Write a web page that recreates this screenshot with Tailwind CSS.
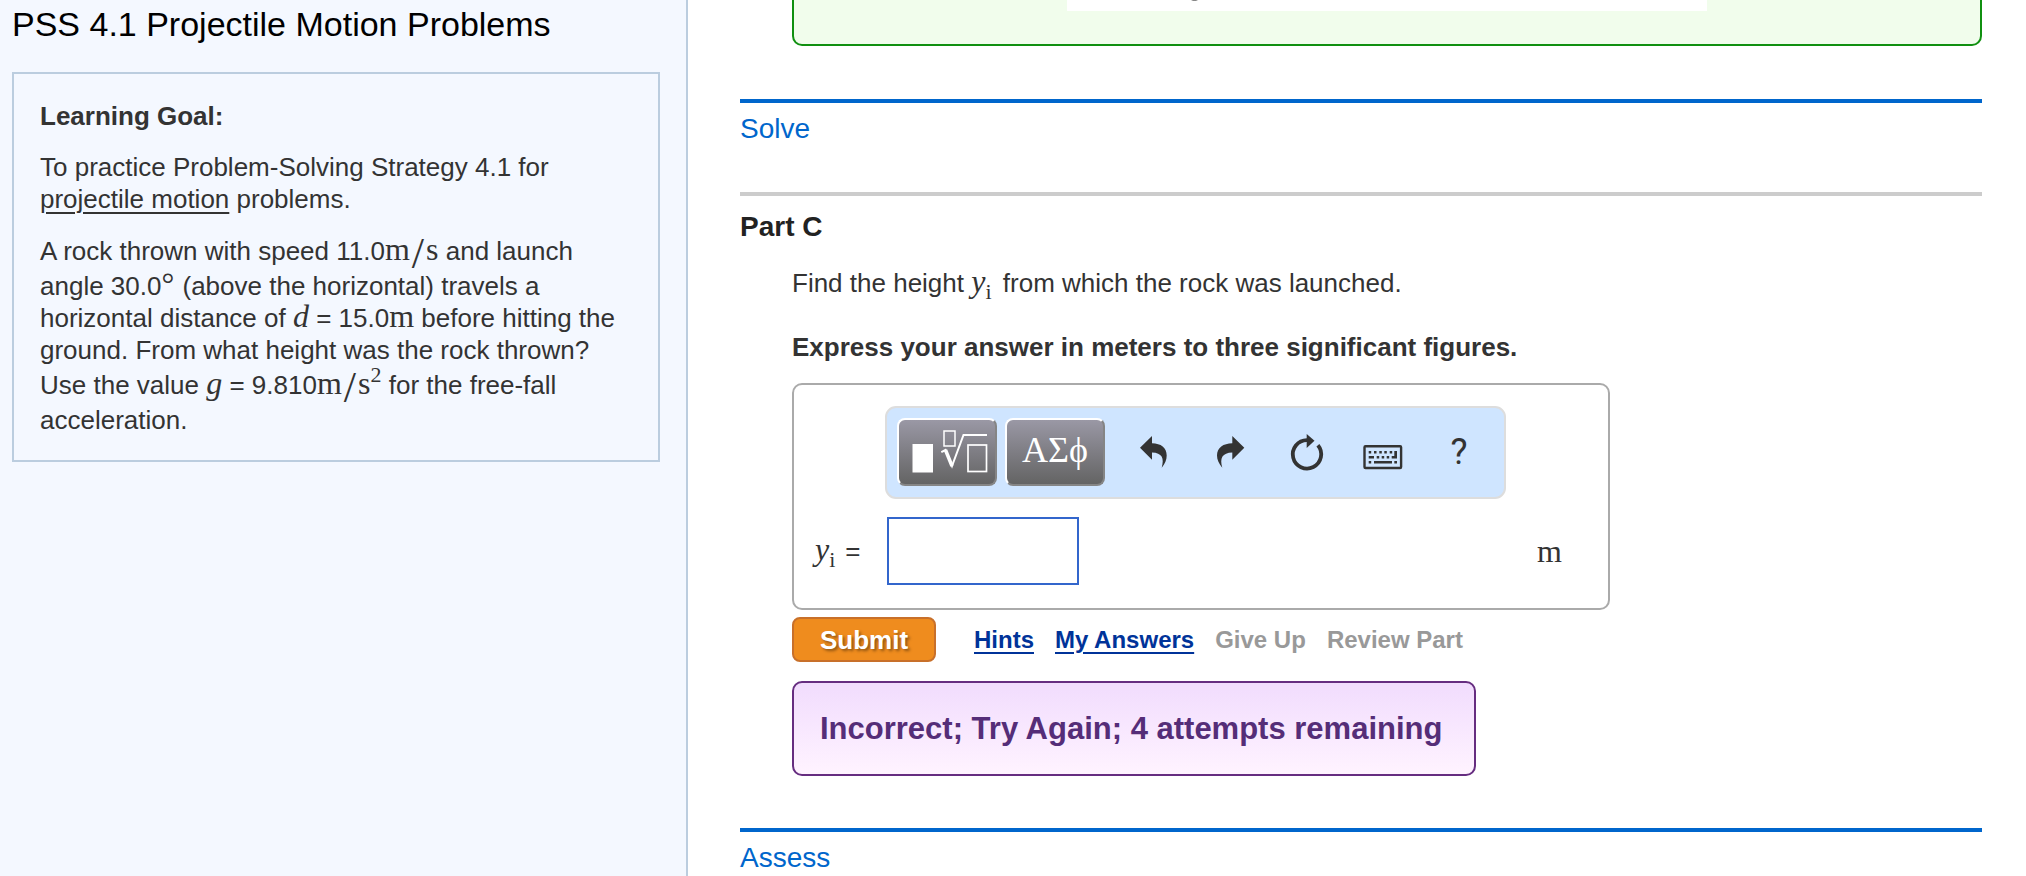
<!DOCTYPE html>
<html lang="en">
  <head>
    <meta charset="UTF-8" />
    <meta name="viewport" content="width=device-width, initial-scale=1.0" />
    <title>PSS 4.1 Projectile Motion Problems</title>
    <script src="https://cdn.jsdelivr.net/npm/@tailwindcss/browser@4"></script>
  </head>
  <body class="flex min-h-screen bg-white font-['Liberation_Sans',Arial,sans-serif] text-[26px] leading-8 text-[#333]">
    <!-- Problem statement -->
    <aside class="w-[688px] shrink-0 border-r-2 border-[#bbcddf] bg-[#f4f8ff] pt-2 pr-[26px] pl-3">
      <h1 class="text-[34px] leading-8 text-black">PSS 4.1 Projectile Motion Problems</h1>

      <section class="mt-8 border-2 border-[#bbcddf] px-[26px] pt-[26px] pb-6">
        <h2 class="font-bold">Learning Goal:</h2>
        <p class="mt-[19px]">
          To practice Problem-Solving Strategy 4.1 for
          <a href="#" class="underline decoration-2 underline-offset-4">projectile motion</a> problems.
        </p>
        <p class="mt-5">
          A rock thrown with speed 11.0<span class="font-['Liberation_Serif',serif] text-[32px] leading-6">m</span><span class="mx-[2px] align-[-8px] font-['Liberation_Serif',serif] text-[44px] leading-8">/</span><span class="font-['Liberation_Serif',serif] text-[32px] leading-6">s</span>
          and launch angle 30.0<span class="mr-px font-['Liberation_Serif',serif] text-[32px] leading-6">°</span>
          (above the horizontal) travels a horizontal distance of
          <i class="font-['Liberation_Serif',serif] text-[32px] leading-6">d</i> = 15.0<span class="font-['Liberation_Serif',serif] text-[32px] leading-6">m</span>
          before hitting the ground. From what height was the rock thrown? Use the value
          <i class="font-['Liberation_Serif',serif] text-[32px] leading-6">g</i> = 9.810<span class="font-['Liberation_Serif',serif] text-[32px] leading-6">m</span><span class="mx-[2px] align-[-8px] font-['Liberation_Serif',serif] text-[44px] leading-8">/</span><span class="font-['Liberation_Serif',serif] text-[32px] leading-6">s</span><span class="align-[12px] font-['Liberation_Serif',serif] text-[22px] leading-[18px]">2</span>
          for the free-fall acceleration.
        </p>
      </section>
    </aside>

    <main class="min-w-0 flex-1 pr-11 pl-[52px]">
      <!-- End of the previous part -->
      <div class="ml-[52px] h-[46px] rounded-b-[10px] border-2 border-t-0 border-[#109010] bg-[#f1fdec]">
        <div class="mx-auto h-[11px] w-[640px] bg-white">
          <svg class="ml-[123px] h-[2px] w-2" viewBox="0 0 8 2" aria-hidden="true">
            <path d="M1 0H8L6 1H3Z" fill="#888" />
          </svg>
        </div>
      </div>

      <section class="mt-[53px] border-t-4 border-[#0066cc] pt-[10px]">
        <h2 class="text-[28px] leading-8 text-[#0066cc]">Solve</h2>
      </section>

      <section class="mt-[47px] border-t-4 border-[#ccc] pt-[15px]">
        <h3 class="text-[28px] leading-8 font-bold text-[#222]">Part C</h3>

        <div class="pl-[52px]">
          <p class="mt-6">
            Find the height
            <i class="font-['Liberation_Serif',serif] text-[32px] leading-6">y</i><span class="mr-1 align-[-7px] font-['Liberation_Serif',serif] text-[22px] leading-[14px]">i</span>
            from which the rock was launched.
          </p>
          <p class="mt-8 font-bold">Express your answer in meters to three significant figures.</p>

          <form>
            <div class="mt-5 w-[818px] rounded-[10px] border-2 border-[#aaa] px-[21px] pt-[21px] pb-[23px]">
              <!-- Equation toolbar -->
              <div class="ml-[70px] flex w-[621px] rounded-[11px] border-2 border-[#ddd] bg-[#cfe5ff] pt-[10px] pb-[11px] pl-[10px]">
                <div class="flex gap-2">
                  <button type="button" aria-label="Templates" class="h-[68px] w-[100px] rounded-[8px] border-2 border-t-white border-r-[#858585] border-b-[#858585] border-l-white bg-linear-to-b from-[#9a98a5] to-[#646464]">
                    <svg class="h-16 w-24" viewBox="2 2 96 64" fill="none" stroke="white">
                      <rect x="15.5" y="26" width="20.5" height="28.5" fill="white" stroke="none" />
                      <rect x="47" y="13" width="11" height="15" stroke-width="1.5" />
                      <path d="M44.3 34.2L48.5 32L55 48L66.5 17H90" stroke-width="2" />
                      <path d="M48.5 32L55 48" stroke-width="3.5" />
                      <rect x="71" y="27" width="18.5" height="26.5" stroke-width="1.7" />
                    </svg>
                  </button>
                  <button type="button" aria-label="Symbols" class="h-[68px] w-[100px] rounded-[8px] border-2 border-t-white border-r-[#858585] border-b-[#858585] border-l-white bg-linear-to-b from-[#9a98a5] to-[#646464] pb-1 font-['Liberation_Serif',serif] text-[36px] leading-none text-white">ΑΣϕ</button>
                </div>
                <div class="ml-[23px] flex gap-6">
                  <button type="button" aria-label="Undo">
                    <svg class="h-[68px] w-[52px]" viewBox="0 0 52 68" fill="#333">
                      <path d="M12 29.7L24 18V25.2C33 25.4 38.7 29.5 38.7 37.5C38.7 42 37 45.5 33.7 49.7C36.5 40 34 35 24 34.6V41.7Z" />
                    </svg>
                  </button>
                  <button type="button" aria-label="Redo">
                    <svg class="h-[68px] w-[52px]" viewBox="0 0 52 68" fill="#333">
                      <path d="M40.3 29.7L28.3 18V25.2C19.3 25.4 13 29.5 13 37.5C13 42 15 45.5 18.3 49.7C15.5 40 18.3 35 28.3 34.6V41.7Z" />
                    </svg>
                  </button>
                  <button type="button" aria-label="Reset">
                    <svg class="h-[68px] w-[52px]" viewBox="0 0 52 68" fill="none">
                      <path d="M37.9 27.2A14.2 14.2 0 1 1 27 22.1" stroke="#333" stroke-width="3.8" />
                      <path d="M26.7 16L34.5 22.8L26.7 30Z" fill="#333" />
                    </svg>
                  </button>
                  <button type="button" aria-label="Keyboard shortcuts">
                    <svg class="h-[68px] w-[52px]" viewBox="0 0 52 68" fill="#333">
                      <rect x="8.5" y="28.2" width="36.6" height="21.8" rx="1" fill="none" stroke="#333" stroke-width="2.4" />
                      <path d="M12.7 33h2.5v2.4h-2.5zM18 33h2.5v2.4H18zM23.3 33h2.5v2.4h-2.5zM28.3 33h2.5v2.4h-2.5zM33.7 33h2.5v2.4h-2.5zM38.3 33H41v7.4h-5.3V38h2.6z" />
                      <path d="M12.7 38H18v2.4h-5.3zM20.7 38h2.5v2.4h-2.5zM25.7 38h2.5v2.4h-2.5zM30.7 38h2.5v2.4h-2.5z" />
                      <path d="M12.7 43h2.5v2.4h-2.5zM18 43h18v2.4H18zM38.3 43H41v2.4h-2.7z" />
                    </svg>
                  </button>
                  <button type="button" aria-label="Help" class="w-[54px] font-['Roboto',sans-serif] text-[36px]">?</button>
                </div>
              </div>

              <div class="mt-[18px] flex items-center">
                <label for="answer" class="flex w-[72px] gap-[10px]">
                  <span><i class="font-['Liberation_Serif',serif] text-[32px] leading-6">y</i><span class="align-[-7px] font-['Liberation_Serif',serif] text-[22px] leading-[14px]">i</span></span>
                  <span>=</span>
                </label>
                <input id="answer" type="text" class="h-[68px] w-48 border-2 border-[#3366cc] bg-white px-2" />
                <span class="mr-[25px] ml-auto font-['Liberation_Serif',serif] text-[32px] leading-6">m</span>
              </div>
            </div>

            <div class="mt-[7px] flex items-center">
              <button type="submit" class="mr-[38px] h-[45px] w-36 rounded-[8px] border-2 border-[#c8702a] bg-[#ef8c1e] font-bold text-white text-shadow-[2px_2px_3px_#0006]">Submit</button>
              <div class="flex gap-[21px] text-[24px] font-bold text-[#999]">
                <a href="#" class="text-[#003399] underline decoration-2 underline-offset-4">Hints</a>
                <a href="#" class="text-[#003399] underline decoration-2 underline-offset-4">My Answers</a>
                <span>Give Up</span>
                <span>Review Part</span>
              </div>
            </div>
          </form>

          <p class="mt-[19px] w-fit rounded-[10px] border-2 border-[#662d80] bg-linear-to-b from-[#f1dcfd] to-[#fff3ff] pt-[30px] pr-8 pb-[29px] pl-[26px] text-[31px] font-bold text-[#552d78]">Incorrect; Try Again; 4 attempts remaining</p>
        </div>
      </section>

      <section class="mt-[52px] border-t-4 border-[#0066cc] pt-[10px]">
        <h2 class="text-[28px] leading-8 text-[#0066cc]">Assess</h2>
      </section>
    </main>
  </body>
</html>
